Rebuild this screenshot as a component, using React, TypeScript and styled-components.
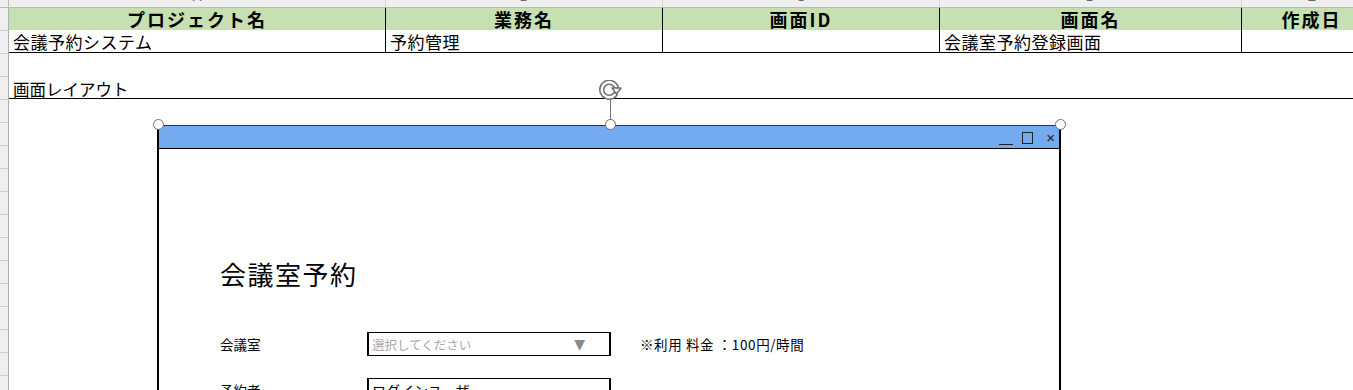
import React from 'react'
import styled, { createGlobalStyle } from 'styled-components'

const GlobalStyle = createGlobalStyle`
  html, body {
    margin: 0;
    padding: 0;
    background: #ffffff;
    overflow: hidden;
  }
  body {
    font-family: 'Noto Sans CJK JP', 'Noto Sans', sans-serif;
    color: #000;
  }
`

const COLS = '377px 277px 277px 302px 140px'

const Sheet = styled.div`
  display: grid;
  grid-template-columns: 9px 1fr;
  grid-template-rows: 8px 1fr;
  height: 390px;
  overflow: hidden;
`

const Corner = styled.div`
  background: #efefef;
  border-right: 1px solid #b9b9b9;
  border-bottom: 1px solid #b9b9b9;
  box-sizing: border-box;
`

const ColumnHeaders = styled.div`
  display: grid;
  grid-template-columns: ${COLS};
  background: #efefef;
  border-bottom: 1px solid #b9b9b9;
  box-sizing: border-box;
  overflow: hidden;
`

const ColLetter = styled.div`
  border-right: 1px solid #d5d5d5;
  text-align: center;
  font-family: 'Liberation Sans', sans-serif;
  font-size: 13px;
  line-height: 14px;
  color: #666;
  margin-top: -10px;
  height: 17px;
`

const RowHeaders = styled.div`
  background-color: #efefef;
  background-image: repeating-linear-gradient(
    to bottom,
    transparent 0,
    transparent 22px,
    #d0d0d0 22px,
    #d0d0d0 23px
  );
  border-right: 1px solid #b0b0b0;
  box-sizing: border-box;
`

const Content = styled.div`
  display: flex;
  flex-direction: column;
  min-width: 0;
`

const InfoTable = styled.div`
  display: grid;
  grid-template-columns: ${COLS};
`

const HeadCell = styled.div`
  height: 22px;
  background: #c6e0b4;
  border-right: 1px solid #000;
  font-size: 18px;
  font-weight: 700;
  letter-spacing: 2px;
  line-height: 22px;
  text-align: center;
  white-space: nowrap;
  overflow: hidden;
`

const DataCell = styled.div`
  height: 22px;
  border-right: 1px solid #000;
  border-bottom: 1px solid #000;
  font-size: 17px;
  letter-spacing: 0.5px;
  line-height: 24px;
  padding-left: 4px;
  white-space: nowrap;
  overflow: hidden;
`

const SheetRow = styled.div<{ $ruled?: boolean }>`
  height: ${(p) => (p.$ruled ? '22px' : '23px')};
  border-bottom: ${(p) => (p.$ruled ? '1px solid #000' : 'none')};
  font-size: 16.5px;
  line-height: 26px;
  padding-left: 4px;
  white-space: nowrap;
`

const Canvas = styled.div`
  padding: 26px 0 0 148px;
`

const WindowFrame = styled.div`
  position: relative;
  width: 904px;
  height: 320px;
  border: 2px solid #000;
  border-top: 1.5px solid #333;
  box-sizing: border-box;
`

const TitleBar = styled.div`
  height: 22px;
  background: #74aaf0;
  border-bottom: 1px solid #000;
  display: flex;
  justify-content: flex-end;
  align-items: center;
  gap: 9px;
  padding-right: 3px;
`

const Minimize = styled.span`
  width: 14px;
  height: 1px;
  margin-top: 14px;
  background: #222;
`

const Maximize = styled.span`
  width: 9px;
  height: 10px;
  border: 1px solid #222;
  margin-top: 1px;
`

const Close = styled.span`
  font-family: 'Liberation Sans', sans-serif;
  font-size: 15px;
  line-height: 15px;
  color: #222;
  margin-left: 4px;
  margin-right: 1px;
`

const WindowBody = styled.div`
  padding: 110px 0 0 61px;
`

const ScreenTitle = styled.h1`
  margin: 0 0 43px;
  font-size: 26px;
  font-weight: 400;
  line-height: 30px;
  letter-spacing: 1.5px;
`

const Form = styled.div`
  display: grid;
  grid-template-columns: 147px 244px auto;
  row-gap: 22px;
  align-items: center;
`

const Label = styled.div`
  font-size: 13.5px;
  line-height: 24px;
`

const Field = styled.div<{ $placeholder?: boolean }>`
  height: 24px;
  box-sizing: border-box;
  border-style: solid;
  border-color: #000;
  border-width: 1px 2px;
  display: flex;
  align-items: center;
  justify-content: space-between;
  padding: 0 24px 0 3px;
  font-size: ${(p) => (p.$placeholder ? '12.5px' : '14px')};
  color: ${(p) => (p.$placeholder ? '#a8a8a8' : '#000')};
`

const Arrow = styled.span`
  font-family: 'DejaVu Sans', sans-serif;
  font-size: 14px;
  color: #8a8a8a;
`

const Note = styled.div`
  padding-left: 29px;
  font-size: 13.5px;
  letter-spacing: 0.6px;
  white-space: nowrap;
`

const Handle = styled.span<{ $x: string }>`
  position: absolute;
  top: -7px;
  left: ${(p) => p.$x};
  width: 9px;
  height: 9px;
  margin-left: -6px;
  border-radius: 50%;
  background: #fff;
  border: 1.5px solid #707070;
`

const RotateStem = styled.span`
  position: absolute;
  left: 451px;
  top: -26px;
  width: 1px;
  height: 20px;
  background: #707070;
`

const RotateIcon = styled.svg`
  position: absolute;
  left: 438px;
  top: -46px;
`

const columns = ['A', 'B', 'C', 'D', 'E']
const heads = ['プロジェクト名', '業務名', '画面ID', '画面名', '作成日']
const values = ['会議予約システム', '予約管理', '', '会議室予約登録画面', '']

const App = () => {
  return (
    <>
      <GlobalStyle />
      <Sheet>
        <Corner />
        <ColumnHeaders>
          {columns.map((c) => (
            <ColLetter key={c}>{c}</ColLetter>
          ))}
        </ColumnHeaders>
        <RowHeaders />
        <Content>
          <InfoTable>
            {heads.map((h) => (
              <HeadCell key={h}>{h}</HeadCell>
            ))}
            {values.map((v, i) => (
              <DataCell key={i}>{v}</DataCell>
            ))}
          </InfoTable>
          <SheetRow />
          <SheetRow $ruled>画面レイアウト</SheetRow>
          <Canvas>
            <WindowFrame>
              <TitleBar>
                <Minimize />
                <Maximize />
                <Close>×</Close>
              </TitleBar>
              <WindowBody>
                <ScreenTitle>会議室予約</ScreenTitle>
                <Form>
                  <Label>会議室</Label>
                  <Field $placeholder>
                    選択してください
                    <Arrow>▼</Arrow>
                  </Field>
                  <Note>※利用 料金 ：100円/時間</Note>
                  <Label>予約者</Label>
                  <Field>ログインユーザー</Field>
                  <div />
                </Form>
              </WindowBody>
              <Handle $x="0px" />
              <Handle $x="452px" />
              <Handle $x="902px" />
              <RotateStem />
              <RotateIcon width="26" height="22" viewBox="0 0 26 22">
                <g fill="none" strokeLinecap="round" strokeLinejoin="round">
                  <path d="M18 14.5 A7.5 7.5 0 1 1 19 6.5" stroke="#707070" strokeWidth="5.5" />
                  <path d="M18 14.5 A7.5 7.5 0 1 1 19 6.5" stroke="#ffffff" strokeWidth="2.4" />
                </g>
                <path d="M15 8 L24 8 L19.5 14 Z" fill="#ffffff" stroke="#707070" strokeWidth="1.5" strokeLinejoin="round" />
              </RotateIcon>
            </WindowFrame>
          </Canvas>
        </Content>
      </Sheet>
    </>
  )
}

export default App
